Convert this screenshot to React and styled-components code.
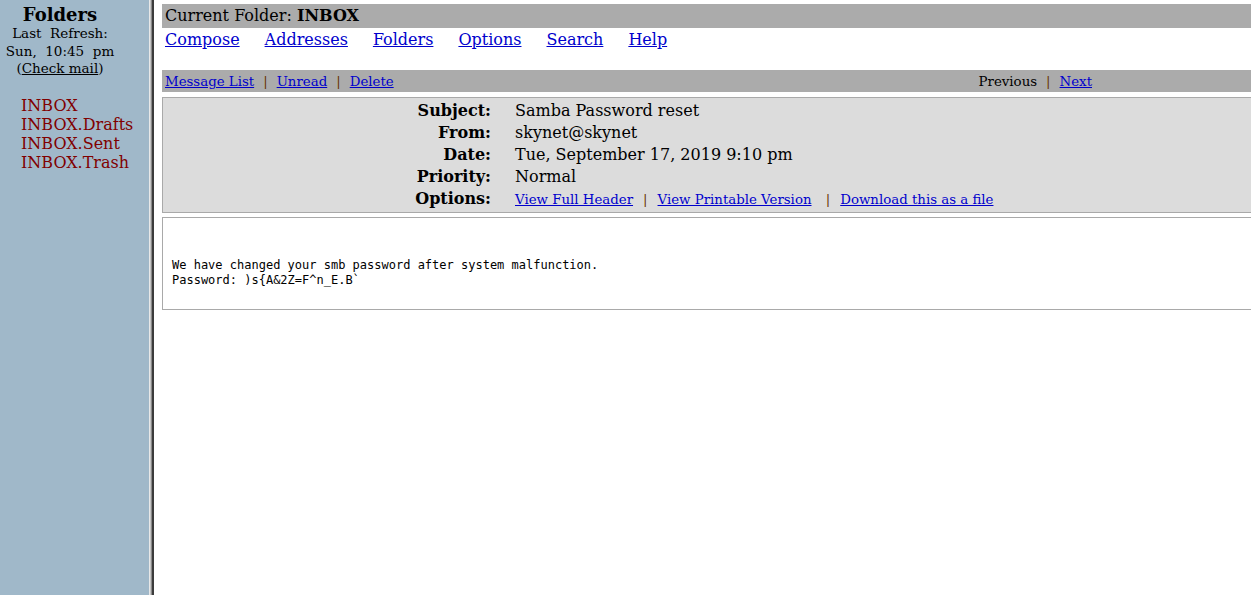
import React from 'react'
import styled, { createGlobalStyle } from 'styled-components'

const Global = createGlobalStyle`
  html, body {
    margin: 0;
    padding: 0;
    background: #ffffff;
    font-family: "DejaVu Serif", "Liberation Serif", serif;
    color: #000;
  }
`

const Frames = styled.div`
  display: flex;
  height: 595px;
  overflow: hidden;
`

const Sidebar = styled.div`
  width: 149px;
  flex-shrink: 0;
  background: #a0b8c9;
  display: flex;
  flex-direction: column;
`

const SideHead = styled.div`
  width: 120px;
  display: flex;
  flex-direction: column;
  align-items: center;
  padding-top: 4px;
`

const FolderTitle = styled.div`
  font-weight: bold;
  font-size: 18px;
  line-height: 21px;
`

const Refresh = styled.div`
  font-size: 13.5px;
  line-height: 17.5px;
  text-align: center;
  white-space: pre;
`

const CheckLink = styled.a`
  color: #000;
  text-decoration: underline;
`

const FolderList = styled.div`
  display: flex;
  flex-direction: column;
  padding: 18px 0 0 21px;
`

const FolderLink = styled.a`
  color: #800000;
  font-size: 16px;
  line-height: 19px;
  text-decoration: none;
`

const Divider = styled.div`
  width: 5px;
  flex-shrink: 0;
  background: linear-gradient(to right, #e8e8e8 0 1px, #c4c4c4 1px 2px, #8a8a8a 2px 3px, #3c3c3c 3px 5px);
`

const Main = styled.div`
  flex: 1;
  min-width: 0;
  padding: 4px 0 0 8px;
  overflow: hidden;
`

const FolderBar = styled.div`
  background: #ababab;
  height: 24px;
  line-height: 24px;
  font-size: 16px;
  padding-left: 3px;
`

const NavRow = styled.nav`
  display: flex;
  gap: 25px;
  padding: 2px 0 0 3px;
  height: 40px;
  font-size: 16px;
  line-height: 20px;
`

const Link = styled.a`
  color: #0000cc;
  text-decoration: underline;
`

const ListBar = styled.div`
  background: #ababab;
  height: 22px;
  display: flex;
  align-items: center;
  font-size: 13.33px;
  padding-left: 3px;
`

const BarGroup = styled.div`
  display: flex;
  align-items: center;
  gap: 9px;
  ${p => p.$right && 'margin-left: auto; margin-right: 159px;'}
`

const Sep = styled.span`
  color: #663300;
`

const HeaderBox = styled.div`
  margin-top: 5px;
  background: #dcdcdc;
  border: 1px solid #a9a9a9;
  border-right: none;
  padding: 1px 0 3px;
  display: grid;
  grid-template-columns: 328px 1fr;
  grid-auto-rows: 22px;
  align-items: center;
`

const Label = styled.div`
  font-weight: bold;
  font-size: 16px;
  text-align: right;
`

const Value = styled.div`
  font-size: 16px;
  padding-left: 24px;
  display: flex;
  gap: 10px;
  white-space: pre;
  ${p => p.$small && 'font-size: 13.33px; padding-top: 2px;'}
`

const BodyBox = styled.div`
  margin-top: 4px;
  border: 1px solid #a9a9a9;
  border-right: none;
  padding: 40px 0 21px 9px;
  font-family: "DejaVu Sans Mono", "Liberation Mono", monospace;
  font-size: 12px;
  line-height: 15px;
  white-space: pre;
`

const headers = [
  ['Subject:', 'Samba Password reset'],
  ['From:', 'skynet@skynet'],
  ['Date:', 'Tue, September 17, 2019 9:10 pm'],
  ['Priority:', 'Normal'],
]

const App = () => {
  return (
    <Frames>
      <Global />
      <Sidebar>
        <SideHead>
          <FolderTitle>Folders</FolderTitle>
          <Refresh>
            {'Last  Refresh:\nSun,  10:45  pm\n'}(<CheckLink href="#">Check mail</CheckLink>)
          </Refresh>
        </SideHead>
        <FolderList>
          <FolderLink href="#">INBOX</FolderLink>
          <FolderLink href="#">INBOX.Drafts</FolderLink>
          <FolderLink href="#">INBOX.Sent</FolderLink>
          <FolderLink href="#">INBOX.Trash</FolderLink>
        </FolderList>
      </Sidebar>
      <Divider />
      <Main>
        <FolderBar>
          Current Folder: <b>INBOX</b>
        </FolderBar>
        <NavRow>
          <Link href="#">Compose</Link>
          <Link href="#">Addresses</Link>
          <Link href="#">Folders</Link>
          <Link href="#">Options</Link>
          <Link href="#">Search</Link>
          <Link href="#">Help</Link>
        </NavRow>
        <ListBar>
          <BarGroup>
            <Link href="#">Message List</Link>
            <Sep>|</Sep>
            <Link href="#">Unread</Link>
            <Sep>|</Sep>
            <Link href="#">Delete</Link>
          </BarGroup>
          <BarGroup $right>
            <span>Previous</span>
            <Sep>|</Sep>
            <Link href="#">Next</Link>
          </BarGroup>
        </ListBar>
        <HeaderBox>
          {headers.map(([label, value]) => (
            <React.Fragment key={label}>
              <Label>{label}</Label>
              <Value>{value}</Value>
            </React.Fragment>
          ))}
          <Label>Options:</Label>
          <Value $small>
            <Link href="#">View Full Header</Link>
            <Sep>|</Sep>
            <Link href="#">View Printable Version</Link>
            <Sep>{' |'}</Sep>
            <Link href="#">Download this as a file</Link>
          </Value>
        </HeaderBox>
        <BodyBox>
          {'We have changed your smb password after system malfunction.\nPassword: )s{A&2Z=F^n_E.B`'}
        </BodyBox>
      </Main>
    </Frames>
  )
}

export default App
